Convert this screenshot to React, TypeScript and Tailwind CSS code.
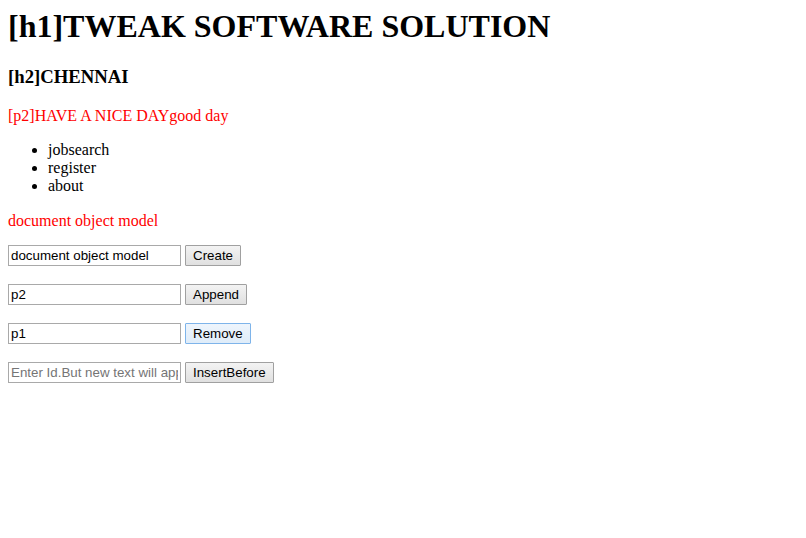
import React from "react";

const serif = { fontFamily: '"Liberation Serif", "Times New Roman", serif' };

function Row({ value, placeholder, label, focused }: { value?: string; placeholder?: string; label: string; focused?: boolean }) {
  return (
    <div className="flex items-center gap-[4px] h-[21px]">
      <input
        readOnly
        defaultValue={value}
        placeholder={placeholder}
        className="w-[173px] h-[21px] border border-[#a9a9a9] px-[2px] text-[13.33px] text-black placeholder:text-[#757575] outline-none bg-white font-['Liberation_Sans',Arial,sans-serif]"
      />
      <button
        className={
          focused
            ? "h-[21px] px-[7px] border border-[#7eb4ea] bg-gradient-to-b from-[#eef5fc] to-[#dfecf9] text-[13.33px] text-black leading-none font-['Liberation_Sans',Arial,sans-serif] rounded-[1px]"
            : "h-[21px] px-[7px] border border-[#a0a0a0] bg-gradient-to-b from-[#f3f3f3] to-[#e0e0e0] text-[13.33px] text-black leading-none font-['Liberation_Sans',Arial,sans-serif] rounded-[1px]"
        }
      >
        {label}
      </button>
    </div>
  );
}

export default function App() {
  return (
    <div className="w-[806px] h-[538px] bg-white pt-[8px] pl-[8px] text-black" style={serif}>
      <h1 className="text-[32px] font-bold leading-[37px]">[h1]TWEAK SOFTWARE SOLUTION</h1>
      <h3 className="mt-[21.4px] text-[18.72px] font-bold leading-[21.5px]">[h2]CHENNAI</h3>
      <p className="mt-[18.8px] text-[16px] leading-[18.4px] text-[#ff0000]">[p2]HAVE A NICE DAYgood day</p>
      <ul className="mt-[16px] list-disc pl-[40px] text-[16px] leading-[18px]">
        <li>jobsearch</li>
        <li>register</li>
        <li>about</li>
      </ul>
      <p className="mt-[17px] text-[16px] leading-[18.4px] text-[#ff0000]">document object model</p>
      <div className="mt-[14.3px] flex flex-col gap-[18px]">
        <Row value="document object model" label="Create" />
        <Row value="p2" label="Append" />
        <Row value="p1" label="Remove" focused />
        <Row placeholder="Enter Id.But new text will appear before it" label="InsertBefore" />
      </div>
    </div>
  );
}
